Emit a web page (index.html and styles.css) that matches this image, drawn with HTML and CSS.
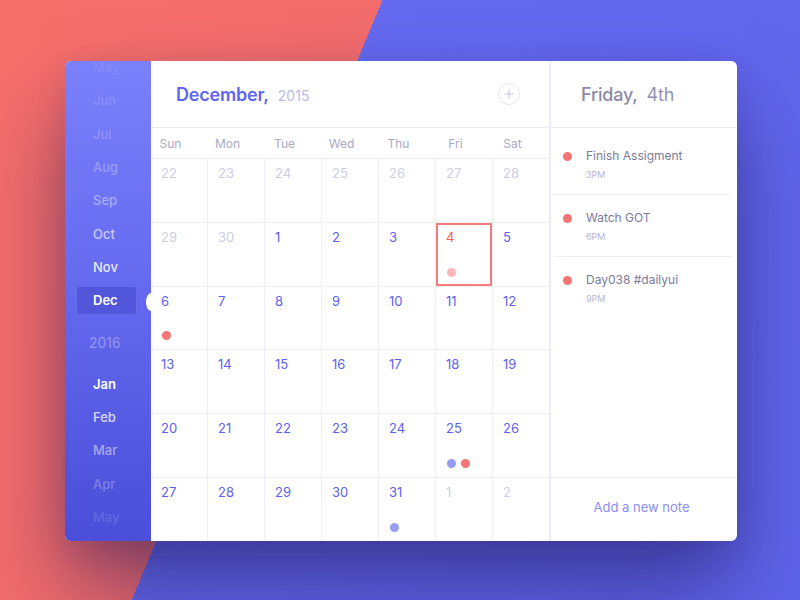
FILE: index.html
```html
<!DOCTYPE html>
<html lang="en">
<head>
<meta charset="utf-8">
<title>Calendar</title>
<link rel="stylesheet" href="styles.css">
</head>
<body>
<div class="card">
  <aside class="sidebar">
    <ul class="months">
      <li class="m o1"><span>May</span></li>
      <li class="m o2"><span>Jun</span></li>
      <li class="m o3"><span>Jul</span></li>
      <li class="m o4"><span>Aug</span></li>
      <li class="m o5"><span>Sep</span></li>
      <li class="m o6"><span>Oct</span></li>
      <li class="m o7"><span>Nov</span></li>
      <li class="m active"><span>Dec</span></li>
      <li class="year"><span>2016</span></li>
      <li class="m o8 strong"><span>Jan</span></li>
      <li class="m o9"><span>Feb</span></li>
      <li class="m o10"><span>Mar</span></li>
      <li class="m o11"><span>Apr</span></li>
      <li class="m o12"><span>May</span></li>
    </ul>
  </aside>

  <main class="cal">
    <span class="notch"></span>
    <header class="cal-head">
      <h1 class="title"><span class="month">December,</span><span class="yr">2015</span></h1>
      <button class="add" type="button" aria-label="Add">
        <svg width="22" height="22" viewBox="0 0 22 22"><circle cx="11" cy="11" r="10.5" fill="none" stroke="#e4e4f3" stroke-width="1"/><path d="M11 6.5v9M6.5 11h9" stroke="#c3c4e4" stroke-width="1.1" fill="none"/></svg>
      </button>
    </header>
    <div class="weekdays">
      <div class="wd"><span>Sun</span></div>
      <div class="wd"><span>Mon</span></div>
      <div class="wd"><span>Tue</span></div>
      <div class="wd"><span>Wed</span></div>
      <div class="wd"><span>Thu</span></div>
      <div class="wd"><span>Fri</span></div>
      <div class="wd"><span>Sat</span></div>
    </div>
    <div class="grid">
      <div class="day off"><span class="n">22</span></div>
      <div class="day off"><span class="n">23</span></div>
      <div class="day off"><span class="n">24</span></div>
      <div class="day off"><span class="n">25</span></div>
      <div class="day off"><span class="n">26</span></div>
      <div class="day off"><span class="n">27</span></div>
      <div class="day off"><span class="n">28</span></div>

      <div class="day off"><span class="n">29</span></div>
      <div class="day off"><span class="n">30</span></div>
      <div class="day"><span class="n">1</span></div>
      <div class="day"><span class="n">2</span></div>
      <div class="day"><span class="n">3</span></div>
      <div class="day selected"><span class="n">4</span><div class="dots"><i class="dot pink"></i></div></div>
      <div class="day"><span class="n">5</span></div>

      <div class="day"><span class="n">6</span><div class="dots"><i class="dot red"></i></div></div>
      <div class="day"><span class="n">7</span></div>
      <div class="day"><span class="n">8</span></div>
      <div class="day"><span class="n">9</span></div>
      <div class="day"><span class="n">10</span></div>
      <div class="day"><span class="n">11</span></div>
      <div class="day"><span class="n">12</span></div>

      <div class="day"><span class="n">13</span></div>
      <div class="day"><span class="n">14</span></div>
      <div class="day"><span class="n">15</span></div>
      <div class="day"><span class="n">16</span></div>
      <div class="day"><span class="n">17</span></div>
      <div class="day"><span class="n">18</span></div>
      <div class="day"><span class="n">19</span></div>

      <div class="day"><span class="n">20</span></div>
      <div class="day"><span class="n">21</span></div>
      <div class="day"><span class="n">22</span></div>
      <div class="day"><span class="n">23</span></div>
      <div class="day"><span class="n">24</span></div>
      <div class="day"><span class="n">25</span><div class="dots"><i class="dot blue"></i><i class="dot red"></i></div></div>
      <div class="day"><span class="n">26</span></div>

      <div class="day"><span class="n">27</span></div>
      <div class="day"><span class="n">28</span></div>
      <div class="day"><span class="n">29</span></div>
      <div class="day"><span class="n">30</span></div>
      <div class="day"><span class="n">31</span><div class="dots"><i class="dot blue"></i></div></div>
      <div class="day off"><span class="n">1</span></div>
      <div class="day off"><span class="n">2</span></div>
    </div>
  </main>

  <section class="notes">
    <header class="notes-head">
      <h2 class="date"><span class="dname">Friday,</span><span class="dnum">4th</span></h2>
    </header>
    <ul class="note-list">
      <li class="note"><i class="ndot"></i><div class="ntext"><div class="ntitle">Finish Assigment</div><div class="ntime">3PM</div></div></li>
      <li class="note"><i class="ndot"></i><div class="ntext"><div class="ntitle">Watch GOT</div><div class="ntime">6PM</div></div></li>
      <li class="note"><i class="ndot"></i><div class="ntext"><div class="ntitle">Day038 #dailyui</div><div class="ntime">9PM</div></div></li>
    </ul>
    <footer class="notes-foot">Add a new note</footer>
  </section>
</div>
</body>
</html>
```

FILE: styles.css
```css
* { box-sizing: border-box; }

html, body {
  margin: 0;
  padding: 0;
  width: 800px;
  height: 600px;
  overflow: hidden;
}

body {
  font-family: "Inter", "Noto Sans", "DejaVu Sans", sans-serif;
  background: linear-gradient(112.7deg, #f76f6b 0, #f26c6c 353px, #6569ef 353px, #6064ea 100%);
  display: flex;
  align-items: center;
  justify-content: center;
}

.card {
  width: 672px;
  height: 480px;
  margin-left: 2px;
  margin-top: 2px;
  display: flex;
  border-radius: 6px;
  overflow: hidden;
  background: #fff;
  box-shadow: 0 50px 90px -4px rgba(30, 22, 90, 0.55), 0 10px 30px rgba(30, 22, 90, 0.12);
}

/* Sidebar */
.sidebar {
  width: 86px;
  flex: none;
  background: linear-gradient(180deg, #7b80fb 0%, #6468ee 50%, #4a4ed8 100%);
  overflow: hidden;
}

.months {
  list-style: none;
  margin: -10px 0 0;
  padding: 0 0 0 11px;
}

.months li {
  height: 33.33px;
  display: flex;
  align-items: center;
  color: #fff;
}

.months .m span {
  display: block;
  width: 61px;
  height: 29px;
  line-height: 29px;
  padding-left: 17px;
  font-size: 13px;
  font-weight: 500;
  border-radius: 3px;
}

.months .strong span { font-weight: 600; }

.months .active span {
  background: #5156db;
  border: 1px solid #676cec;
  padding-left: 16px;
  line-height: 27px;
  font-weight: 600;
}

.months .year {
  height: 50px;
}

.months .year span {
  padding-left: 13px;
  font-size: 14px;
  font-weight: 400;
  opacity: 0.32;
}

.o1 { opacity: 0.08; }
.o2 { opacity: 0.15; }
.o3 { opacity: 0.2; }
.o4 { opacity: 0.28; }
.o5 { opacity: 0.4; }
.o6 { opacity: 0.62; }
.o7 { opacity: 0.85; }
.o8 { opacity: 1; }
.o9 { opacity: 0.75; }
.o10 { opacity: 0.48; }
.o11 { opacity: 0.26; }
.o12 { opacity: 0.13; }

/* Calendar */
.cal {
  width: 398px;
  flex: none;
  position: relative;
  display: flex;
  flex-direction: column;
}

.notch {
  position: absolute;
  left: -5px;
  top: 232px;
  width: 10px;
  height: 18px;
  border-radius: 50%;
  background: #fff;
}

.cal-head {
  height: 67px;
  flex: none;
  border-bottom: 1px solid #ebebf7;
  display: flex;
  align-items: center;
  justify-content: space-between;
  padding: 0 29px 0 25px;
}

.title {
  margin: 0;
  display: flex;
  align-items: baseline;
  font-weight: 400;
}

.title .month {
  font-size: 18px;
  font-weight: 600;
  color: #6065ef;
  letter-spacing: -0.2px;
}

.title .yr {
  font-size: 14px;
  color: #b9bae6;
  margin-left: 9px;
}

.add {
  width: 22px;
  height: 22px;
  padding: 0;
  border: 0;
  background: none;
  display: block;
}

.add svg { display: block; }

.weekdays {
  height: 31px;
  flex: none;
  display: grid;
  grid-template-columns: repeat(7, 1fr);
  column-gap: 1px;
  border-bottom: 1px solid #ebebf7;
}

.wd {
  display: flex;
  align-items: center;
}

.wd span {
  display: block;
  width: 39px;
  text-align: center;
  font-size: 12px;
  color: #a9a9c6;
}

.grid {
  flex: 1;
  display: grid;
  grid-template-columns: repeat(7, 1fr);
  grid-template-rows: repeat(6, 1fr);
  gap: 1px;
  background: #eeeef9;
}

.day {
  background: #fff;
  display: flex;
  flex-direction: column;
  align-items: flex-start;
  padding: 6px 10px 9px 10px;
}

.day .n {
  font-size: 13px;
  line-height: 16px;
  color: #5d62ee;
}

.day.off .n { color: #cdcde4; }

.day.selected {
  box-shadow: inset 0 0 0 2px #f67b7b;
}

.day.selected .n { color: #f25d5d; }

.dots {
  margin-top: auto;
  display: flex;
  gap: 5px;
  padding-left: 1px;
}

.dot {
  display: block;
  width: 9px;
  height: 9px;
  border-radius: 50%;
}

.dot.red { background: #f47575; }
.dot.blue { background: #989bf4; }
.dot.pink { background: #ffb8b8; }

/* Notes */
.notes {
  flex: 1;
  border-left: 2px solid #ececf7;
  display: flex;
  flex-direction: column;
}

.notes-head {
  height: 67px;
  flex: none;
  border-bottom: 1px solid #ebebf7;
  display: flex;
  align-items: center;
  padding-left: 30px;
}

.date {
  margin: 0;
  font-size: 18px;
  font-weight: 400;
  color: #8b8ba7;
  letter-spacing: -0.2px;
}

.date .dname { font-weight: 500; }
.date .dnum { margin-left: 9px; color: #9393af; }

.note-list {
  list-style: none;
  margin: 0 6px 0 3px;
  padding: 5px 0 0;
  flex: 1;
}

.note {
  display: flex;
  align-items: flex-start;
  padding: 15px 0 13px 9px;
  border-bottom: 1px solid #ededf8;
}

.note:last-child { border-bottom: 0; }

.ndot {
  display: block;
  width: 9px;
  height: 9px;
  border-radius: 50%;
  background: #f47474;
  margin-top: 4px;
  flex: none;
}

.ntext { margin-left: 14px; }

.ntitle {
  font-size: 12px;
  line-height: 16px;
  color: #7b7b98;
}

.ntime {
  margin-top: 5px;
  font-size: 9px;
  line-height: 12px;
  color: #b6b6ce;
}

.notes-foot {
  height: 64px;
  flex: none;
  border-top: 1px solid #ebebf7;
  display: flex;
  align-items: center;
  justify-content: center;
  padding: 0 5px 6px 0;
  font-size: 13px;
  color: #8b8ef2;
}
```
